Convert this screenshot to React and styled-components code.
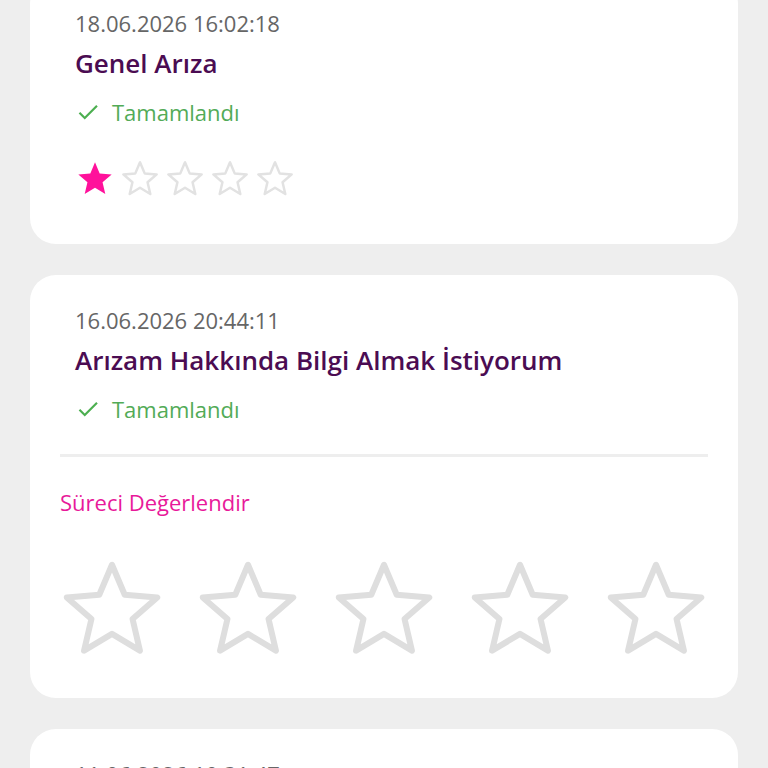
import React from "react";
import styled, { createGlobalStyle } from "styled-components";

const Global = createGlobalStyle`
  html, body { margin: 0; padding: 0; background: #eeeeee; overflow: hidden; }
  body { font-family: "Open Sans", "Noto Sans", sans-serif; }
`;

const Page = styled.div`
  height: 768px;
  overflow: hidden;
  background: #eeeeee;
`;

const List = styled.div`
  display: flex;
  flex-direction: column;
  gap: 31px;
  padding: 0 30px;
  margin-top: -22px;
`;

const Card = styled.div`
  background: #ffffff;
  border-radius: 26px;
  padding: 31px 30px ${(p) => p.$bottom}px;
  display: flex;
  flex-direction: column;
`;

const Header = styled.div`
  display: flex;
  flex-direction: column;
  padding-left: 15px;
`;

const DateText = styled.div`
  font-size: 22px;
  line-height: 28px;
  color: #666666;
`;

const Title = styled.div`
  margin-top: 10px;
  font-size: 26px;
  line-height: 32px;
  font-weight: 600;
  color: #4b0c52;
`;

const Status = styled.div`
  margin-top: 19px;
  display: flex;
  align-items: center;
  gap: 11px;
  font-size: 22px;
  line-height: 28px;
  color: #52ab57;
`;

const SmallStars = styled.div`
  margin-top: 33px;
  display: flex;
  gap: 5px;
`;

const Divider = styled.div`
  margin-top: 31px;
  height: 3px;
  background: #eeeeee;
`;

const RateLabel = styled.div`
  margin-top: 31px;
  font-size: 22px;
  line-height: 28px;
  color: #e8199a;
`;

const BigStars = styled.div`
  margin-top: 42px;
  display: flex;
  justify-content: space-between;
`;

const STAR =
  "M12 17.27L18.18 21l-1.64-7.03L22 9.24l-7.19-.61L12 2 9.19 8.63 2 9.24l5.46 4.73L5.82 21z";

const Check = () => (
  <svg width="26" height="26" viewBox="0 0 24 24" fill="#4caf50">
    <path d="M9 16.17L4.83 12l-1.42 1.41L9 19 21 7l-1.41-1.41z" />
  </svg>
);

const StarFilled = () => (
  <svg width="40" height="40" viewBox="0 0 24 24" fill="#ff119b">
    <path d={STAR} />
  </svg>
);

const StarOutline = () => (
  <svg width="40" height="40" viewBox="0 0 24 24">
    <path d={STAR} fill="none" stroke="#e2e2e2" strokeWidth="1.5" strokeLinejoin="round" />
  </svg>
);

const BigStar = () => (
  <svg width="104" height="104" viewBox="0.5 0.5 23 23">
    <path d={STAR} fill="none" stroke="#dedede" strokeWidth="1.33" strokeLinejoin="round" />
  </svg>
);

const StatusRow = () => (
  <Status>
    <Check />
    <span>Tamamlandı</span>
  </Status>
);

export default function App() {
  return (
    <Page>
      <Global />
      <List>
        <Card $bottom={45}>
          <Header>
            <DateText>18.06.2026 16:02:18</DateText>
            <Title>Genel Arıza</Title>
            <StatusRow />
            <SmallStars>
              <StarFilled />
              <StarOutline />
              <StarOutline />
              <StarOutline />
              <StarOutline />
            </SmallStars>
          </Header>
        </Card>
        <Card $bottom={36}>
          <Header>
            <DateText>16.06.2026 20:44:11</DateText>
            <Title>Arızam Hakkında Bilgi Almak İstiyorum</Title>
            <StatusRow />
          </Header>
          <Divider />
          <RateLabel>Süreci Değerlendir</RateLabel>
          <BigStars>
            <BigStar />
            <BigStar />
            <BigStar />
            <BigStar />
            <BigStar />
          </BigStars>
        </Card>
        <Card $bottom={45}>
          <Header>
            <DateText>11.06.2026 10:31:47</DateText>
            <Title>Genel Arıza</Title>
            <StatusRow />
          </Header>
        </Card>
      </List>
    </Page>
  );
}
